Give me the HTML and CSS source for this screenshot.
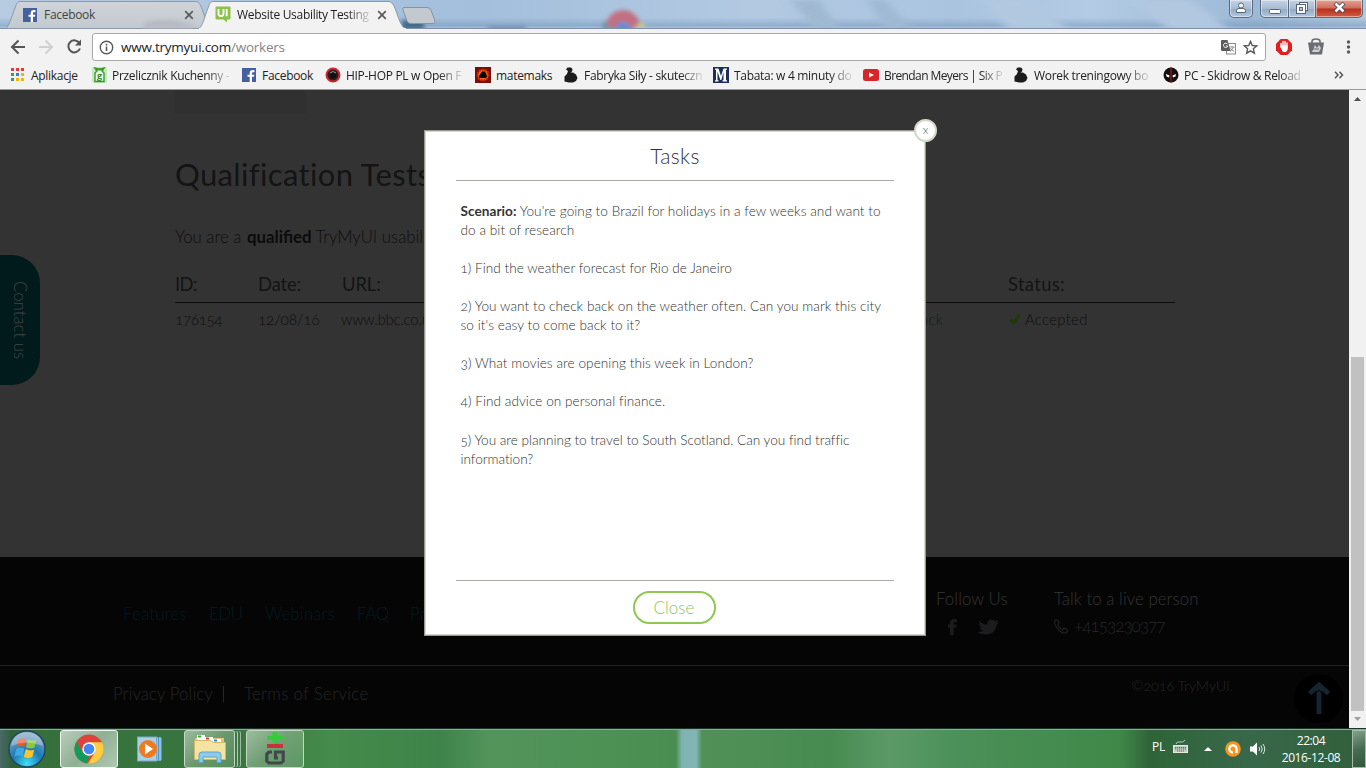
FILE: index.html
```html
<!DOCTYPE html>
<html lang="pl">
<head>
<meta charset="utf-8">
<title>Website Usability Testing</title>
<link rel="stylesheet" href="styles.css">
</head>
<body>
<header class="titlebar">
  <svg class="tab-shapes" width="1366" height="29" viewBox="0 0 1366 29">
    <defs>
      <filter id="soft" x="-50%" y="-50%" width="200%" height="200%"><feGaussianBlur stdDeviation="2"/></filter>
      <filter id="haze" x="-50%" y="-50%" width="200%" height="200%"><feGaussianBlur stdDeviation="5 2"/></filter>
      <linearGradient id="itab" x2="0" y2="1"><stop offset="0" stop-color="#d0d4d9"/><stop offset="1" stop-color="#c3c9cf"/></linearGradient>
    </defs>
    <g filter="url(#haze)">
      <path d="M790 0h30l20 30h-24zM866 0h20l26 30h-24z" fill="#a0b9d3"/>
      <path d="M980 0h50l40 30h-60zM1130 0h60l40 30h-60z" fill="#b2c8e1"/>
    </g>
    <g filter="url(#soft)">
      <path d="M605 30a18 20 0 0 1 36 0z" fill="#c16f80"/>
      <path d="M602 30q0-6 3-9l7 9z" fill="#5d9aa0"/><path d="M645 30q0-6-3-9l-10 9z" fill="#c8c69b"/>
      <circle cx="623" cy="30" r="8" fill="#5f8fd8"/>
      <path d="M402 20h22v10h-22z" fill="#456a8c"/>
      <path d="M488 27h38v4h-38z" fill="#66819f"/>
    </g>
    <path d="M0 28.500H1366" stroke="#7d92aa"/>
    <path d="M5.500 28.500C9 27 11 18 15 8C17 2 18 1.500 21 1.500H195C199 1.500 200 4 202 9L209 28.500Z" fill="url(#itab)" stroke="#8d99a8"/>
    <path d="M143 28q0-8 20-8t34 8z" fill="#b4babf" filter="url(#soft)"/>
    <path d="M198.500 29C203 26 204 18 208 8C210 2 211 1.500 214 1.500H388C392 1.500 394 5 396 11C399 19 401 27 406 29Z" fill="#f2f2f2" stroke="#8d99a8"/>
    <path d="M199 29H406" stroke="#f2f2f2" stroke-width="2"/>
    <path d="M404 7.500H427Q430 7.500 431 10L435 21Q436 23.500 433 23.500H411Q408 23.500 407 21L403 10Q402 7.500 404 7.500Z" fill="#c4c9cf" stroke="#8494a7"/>
  </svg>
  <div class="tab tab-one">
    <svg width="14" height="14" viewBox="0 0 14 14"><rect width="14" height="14" fill="#4560a0"/><path d="M10 14V8.700h2l.3-2H10V5.400c0-.8.3-1.200 1.200-1.200h1.300V2.200C12 2.100 11.300 2 10.700 2 8.800 2 7.700 3.100 7.700 5v1.700H5.500v2h2.200V14z" fill="#fff"/></svg>
    <span class="tab-text">Facebook</span>
    <svg class="tab-x" width="10" height="10" viewBox="0 0 10 10"><path d="M1.200 1.200l7.600 7.600M8.800 1.200L1.200 8.800" stroke="#5a5a5a" stroke-width="1.700"/></svg>
  </div>
  <div class="tab tab-two">
    <svg width="16" height="17" viewBox="0 0 16 17"><path d="M1.500.5h13a1 1 0 0 1 1 1v11a1 1 0 0 1-1 1H12v3l-3.500-3h-7a1 1 0 0 1-1-1v-11a1 1 0 0 1 1-1z" fill="#8bc34a"/><path d="M3.500 3v4.500q0 2.500 2.500 2.500t2.500-2.500V3M11.700 3v7.200" fill="none" stroke="#fff" stroke-width="1.900"/></svg>
    <span class="tab-text fade">Website Usability Testing</span>
    <svg class="tab-x" width="10" height="10" viewBox="0 0 10 10"><path d="M1.200 1.200l7.600 7.600M8.800 1.200L1.200 8.800" stroke="#5a5a5a" stroke-width="1.700"/></svg>
  </div>
  <div class="win-controls">
    <span class="wc user"><svg width="10" height="11" viewBox="0 0 10 11"><circle cx="5" cy="3.500" r="2.500" fill="#fff" stroke="#56657a"/><path d="M.5 10.500V8.500Q.5 6.500 3 6.500h4q2.500 0 2.500 2v2z" fill="#fff" stroke="#56657a"/></svg></span>
    <span class="wc min"><svg width="12" height="12" viewBox="0 0 12 12"><rect x=".5" y="7.500" width="11" height="4" rx="1" fill="#fff" stroke="#56657a"/></svg></span>
    <span class="wc max"><svg width="12" height="12" viewBox="0 0 12 12"><rect x="3.500" y=".5" width="8" height="8" fill="#fff" stroke="#56657a"/><rect x=".5" y="2.500" width="9" height="9" fill="#fff" stroke="#56657a"/><rect x="3.500" y="5.500" width="3" height="3" fill="#b8c8dc" stroke="#56657a"/></svg></span>
    <span class="wc shut"><svg width="13" height="11" viewBox="0 0 13 11"><path d="M2 1l9 9M11 1l-9 9" stroke="#4d3f4b" stroke-width="4.200"/><path d="M2.500 1.500l8 8M10.500 1.500l-8 8" stroke="#fff" stroke-width="2.500"/></svg></span>
  </div>
</header>

<nav class="toolbar">
  <svg class="nav-icons" width="92" height="34" viewBox="0 0 92 34">
    <g fill="none" stroke-width="2"><path d="M25 18H12.500M18.500 11.500L12 18l6.500 6.500" stroke="#555"/><path d="M39 18h12.500M45.500 11.500L52 18l-6.500 6.500" stroke="#d0d0d0"/><path d="M79.500 14.200A6 6 0 1 0 80 19.500" stroke="#555"/></g>
    <path d="M81 10.500v6h-6z" fill="#555"/>
  </svg>
  <div class="omnibox">
    <svg width="15" height="15" viewBox="0 0 15 15"><circle cx="7.500" cy="7.500" r="6.200" fill="none" stroke="#5a5a5a" stroke-width="1.400"/><path d="M7.500 6.500v4.500M7.500 3.700v1.700" stroke="#5a5a5a" stroke-width="1.600"/></svg>
    <span class="url"><span>www.trymyui.com</span><span class="path">/workers</span></span>
    <svg class="translate" width="15" height="15" viewBox="0 0 15 15"><rect x="5.500" y="3.500" width="9" height="10.500" fill="#fff" stroke="#888"/><path d="M8.500 7h5M11 6v1M12.500 7q-1 3-3.500 4.500M9.500 8q1 2.500 3.500 3.500" fill="none" stroke="#888" stroke-width=".9"/><path d="M0 1q0-1 1-1h5.500L9.500 11H1q-1 0-1-1z" fill="#5c5c5c"/><path d="M6.600 4.200A2.200 2.200 0 1 0 6.800 6H4.800" fill="none" stroke="#fff"/></svg>
    <svg width="15" height="15" viewBox="0 0 15 15"><path d="M7.500 1.400l1.800 4.100 4.500.4-3.400 2.900 1 4.400-3.900-2.300-3.900 2.300 1-4.400L1.200 5.900l4.500-.4z" fill="none" stroke="#5a5a5a" stroke-width="1.400"/></svg>
  </div>
  <svg class="ext" width="100" height="34" viewBox="0 0 100 34">
    <path d="M14.700 10h6.600l4.700 4.700v6.600L21.300 26h-6.600L10 21.300v-6.600z" fill="#e01f1f"/>
    <path d="M15 18v-3.500M17 17v-4.500M19 17v-4.500M21 17v-3" stroke="#fff" stroke-width="1.400" stroke-linecap="round"/><path d="M14.300 16.500h7.400q.6 5-1.700 6.500h-3q-2-2-2.700-6.500z" fill="#fff"/>
    <path d="M46 14.500v-2q0-2.500 4-2.500t4 2.500v2" fill="none" stroke="#6b6d74" stroke-width="1.600"/><path d="M42 13.500h16L56 25.500H44z" fill="#6b6d74"/><path d="M46 23l3-7 2 3 2-3 2 3-2 4z" fill="#cfd0d4"/><path d="M47 20h6" stroke="#6b6d74"/>
    <g fill="#5a5a5a"><circle cx="82.500" cy="13" r="1.700"/><circle cx="82.500" cy="18" r="1.700"/><circle cx="82.500" cy="23" r="1.700"/></g>
  </svg>
</nav>

<nav class="bookmarks">
  <div class="bm"><svg width="14" height="14" viewBox="0 0 14 14"><path d="M0 0h3v3H0zM5 0h3v3H5zM10 0h3v3h-3z" fill="#e53935"/><path d="M0 5h3v3H0z" fill="#35a15a"/><path d="M5 5h3v3H5z" fill="#3c7de0"/><path d="M10 5h3v3h-3z" fill="#f5b400"/><path d="M0 10h3v3H0z" fill="#35a15a"/><path d="M5 10h3v3H5zM10 10h3v3h-3z" fill="#f5b400"/></svg><span>Aplikacje</span></div>
  <div class="bm"><svg width="15" height="16" viewBox="0 0 15 16"><rect width="15" height="16" rx="2" fill="#c5e8c0"/><path d="M3 1l2 3-2 2v8.500h9V6l-2-2 2-3-3 1H6z" fill="#f4fbf0" stroke="#3c9a28" stroke-width="1.400"/><path d="M3.500 2.500h8" stroke="#3c9a28" stroke-width="2"/><text x="5" y="12" class="glyph-g">g</text></svg><span class="fade">Przelicznik Kuchenny -</span></div>
  <div class="bm"><svg width="14" height="14" viewBox="0 0 14 14"><rect width="14" height="14" fill="#4560a0"/><path d="M10 14V8.700h2l.3-2H10V5.400c0-.8.3-1.200 1.200-1.200h1.300V2.200C12 2.100 11.300 2 10.700 2 8.800 2 7.700 3.100 7.700 5v1.700H5.500v2h2.200V14z" fill="#fff"/></svg><span class="shift">Facebook</span></div>
  <div class="bm"><svg width="16" height="16" viewBox="0 0 16 16"><circle cx="8" cy="8" r="6.500" fill="#2b2022" stroke="#d8232f" stroke-width="2"/><circle cx="8" cy="8" r="3.500" fill="#111"/><path d="M5 6q3-3 6 0" stroke="#999" fill="none"/></svg><span class="fade">HIP-HOP PL w Open F</span></div>
  <div class="bm"><svg width="16" height="16" viewBox="0 0 16 16"><rect width="16" height="16" fill="#7a0e05"/><circle cx="8" cy="8" r="5.500" fill="#f0641a" stroke="#c22a08" stroke-width="2" stroke-dasharray="2 1"/><path d="M7 4.500h3l2 4.500-1 2H4.500L4 9z" fill="#0c0200"/></svg><span>matemaks</span></div>
  <div class="bm"><svg width="14" height="16" viewBox="0 0 14 16"><path d="M2 2.500L3.500 .500H7L8.500 2 8 4.500 6.500 5.500 9 5.500 12 7.500 13.500 11 12 14 9 15.500H5L.500 14.500V9.500L3 7 4 4z" fill="#1c1c1c"/></svg><span class="fade shift">Fabryka Siły - skuteczn</span></div>
  <div class="bm"><svg width="16" height="16" viewBox="0 0 16 16"><rect width="16" height="16" fill="#1c2f5c"/><path d="M2 1.500h3.500L8 9l2.500-7.500H14v1.200h-1v10.600h1v1.200H9.500v-1.200h1V5L8.300 13h-1L4.500 4.500v8.800h1v1.200H2v-1.200h1V2.700H2z" fill="#fff"/></svg><span class="fade">Tabata: w 4 minuty do</span></div>
  <div class="bm"><svg width="16" height="12" viewBox="0 0 16 12"><rect width="16" height="12" rx="2.500" fill="#d8252a"/><path d="M6 3.500l5 2.500-5 2.500z" fill="#fff"/></svg><span class="fade tight">Brendan Meyers | Six P</span></div>
  <div class="bm"><svg width="14" height="16" viewBox="0 0 14 16"><path d="M2 2.500L3.500 .500H7L8.500 2 8 4.500 6.500 5.500 9 5.500 12 7.500 13.500 11 12 14 9 15.500H5L.500 14.500V9.500L3 7 4 4z" fill="#1c1c1c"/></svg><span class="fade shift">Worek treningowy bo</span></div>
  <div class="bm"><svg width="16" height="16" viewBox="0 0 16 16"><circle cx="8" cy="8" r="7.500" fill="#141010"/><path d="M8 0v16" stroke="#a31a1e" stroke-width="1.200"/><path d="M3 7l3.500 1.500L6 10.500 3.500 9.500zM13 7L9.500 8.500l.5 2 2.500-1z" fill="#fff"/></svg><span class="fade">PC - Skidrow &amp; Reload</span></div>
  <svg class="more" width="10" height="8" viewBox="0 0 10 8"><path d="M1 .8L4 4 1 7.200M5.500 .8L8.500 4l-3 3.200" fill="none" stroke="#555" stroke-width="1.500"/></svg>
</nav>

<main class="viewport">
  <div class="site">
    <section class="content">
      <div class="stub"></div>
      <h1>Qualification Tests</h1>
      <p class="lead"><span class="intro">You are a</span><b>qualified</b><span>TryMyUI usability</span></p>
      <div class="row head"><span class="h-id">ID:</span><span>Date:</span><span>URL:</span><span></span><span class="h-status">Status:</span></div>
      <div class="row"><span class="num-id">176154</span><span class="num-date">12/08/16</span><span class="site-url">www.bbc.co.uk</span><span class="fb">Feedback</span><span class="ok"><svg width="12" height="12" viewBox="0 0 12 12"><path d="M1.500 6.500l3 3.500L10.500 2" fill="none" stroke="#1d3a08" stroke-width="3"/></svg>Accepted</span></div>
    </section>
    <footer class="foot">
      <div class="foot-top">
        <div class="links"><a class="features">Features</a><a class="edu">EDU</a><a class="webinars">Webinars</a><a class="faq">FAQ</a><a>Pricing</a></div>
        <div class="follow">Follow Us<div class="social">
          <svg width="9" height="16" viewBox="0 0 9 16"><path d="M2 16V8.500H0V5.500h2V4q0-4 4-4h2.700v3H7Q5.600 3 5.600 4.300v1.200h3L8.200 8.500H5.600V16z" fill="#1c1c1e"/></svg>
          <svg width="22" height="16" viewBox="0 0 22 16"><path d="M2 1.500q3 4 8.500 4Q10 .500 14.500.500q2 0 3.500 1.500l3-1-1.500 2.500L22 3.500l-2.500 2.500Q19 15.500 8 15.500q-4 0-7.500-2.500 4 0 6-1.500-3-.500-4-3h2Q2 7.500 2 1.500z" fill="#1c1c1e"/></svg></div></div>
        <div class="talk">Talk to a live person<div class="phone"><svg width="14" height="15" viewBox="0 0 14 15"><path d="M1 1.500Q3-.500 4.500 2.500q1 2-.500 3Q4.500 8.500 8 10.500q2-2 4-.500 2.500 1.500 1 3-3 2.500-7-1Q-.500 6 1 1.500z" fill="none" stroke="#232323" stroke-width="1.100"/></svg><span>+4153230377</span></div></div>
      </div>
      <div class="foot-bottom"><span class="privacy">Privacy Policy</span><span class="bar"></span><span class="terms">Terms of Service</span><span class="copy">©2016 TryMyUI.</span>
        <span class="to-top"><svg width="24" height="34" viewBox="0 0 24 34"><path d="M12 32V6M2.500 11.500L12 3l9.500 8.500" fill="none" stroke="#142430" stroke-width="5"/><path d="M8 12l4-4 4 4" fill="none" stroke="#000"/></svg></span>
      </div>
    </footer>
    <div class="contact">Contact us</div>
  </div>
  <div class="scroll">
    <svg width="7" height="4" viewBox="0 0 7 4"><path d="M3.500 0L7 4H0z" fill="#505050"/></svg>
    <div class="thumb"></div>
    <svg width="7" height="4" viewBox="0 0 7 4"><path d="M3.500 4L7 0H0z" fill="#a0a0a0"/></svg>
  </div>
  <div class="modal">
    <div class="x">x</div>
    <h2>Tasks</h2>
    <div class="body">
      <p><b>Scenario:</b> You're going to Brazil for holidays in a few weeks and want to<br>do a bit of research</p>
      <p class="one">1) Find the weather forecast for Rio de Janeiro</p>
      <p>2) You want to check back on the weather often. Can you mark this city<br>so it's easy to come back to it?</p>
      <p>3) What movies are opening this week in London?</p>
      <p>4) Find advice on personal finance.</p>
      <p class="five">5) You are planning to travel to South Scotland. Can you find traffic<br>information?</p>
    </div>
    <div class="actions"><button>Close</button></div>
  </div>
</main>

<footer class="taskbar">
  <svg class="orb" width="40" height="40" viewBox="0 0 40 40"><defs><radialGradient id="orb" cx=".5" cy=".9" r=".9"><stop offset="0" stop-color="#3fe0f5"/><stop offset=".45" stop-color="#1a7ab5"/><stop offset="1" stop-color="#8eacc2"/></radialGradient></defs><circle cx="20" cy="20" r="18" fill="url(#orb)" stroke="#22465e" stroke-width="1.500"/><path d="M11 11q4-3 8-1l-1.500 8q-4-2-8 .500z" fill="#e8592a"/><path d="M20.500 10.500q5 2 9 0l-2 8q-4 2-8.500 0z" fill="#8cc63f"/><path d="M9.300 20q4-2.500 8-.5l-2 8q-4-2-8 .5z" fill="#3fa9e8"/><path d="M18.800 20q4 2.500 8.500.5l-2 7.500q-4 2-8.500 0z" fill="#fbc32d"/><path d="M4 17Q6 4 20 3.500 34 4 36 17 20 10 4 17z" fill="#fff" opacity=".3"/></svg>
  <div class="tb active"><svg width="30" height="30" viewBox="0 0 30 30"><circle cx="15" cy="15" r="14.500" fill="#db4437"/><path d="M2.440 7.750L8.800 18.500 15 21.700 13 29.400A14.500 14.500 0 0 1 2.440 7.750z" fill="#0f9d58"/><path d="M15 8.300H27.900A14.500 14.500 0 0 1 14 29.500L20.800 18.300z" fill="#ffcd40"/><circle cx="15" cy="15" r="6.700" fill="#fff"/><circle cx="15" cy="15" r="5.300" fill="#4285f4"/></svg></div>
  <div class="tb plain"><svg width="26" height="26" viewBox="0 0 26 26"><path d="M18 1l7 1v22l-7 1z" fill="#4a9ad0"/><path d="M20 1v24M23 1v24" stroke="#cfe9f8"/><rect x=".5" y="1" width="19" height="24" fill="#a9cfe6" stroke="#7aa9c6"/><circle cx="11" cy="13" r="9" fill="#f27a1e"/><path d="M8 7.500l8 5.500-8 5.500z" fill="#fff"/></svg></div>
  <div class="tb stack"><svg width="34" height="30" viewBox="0 0 34 30"><path d="M2 4h29v22H2z" fill="#e2c673"/><path d="M4 1h8v7H4z" fill="#fff"/><path d="M5 1.500h3v2H5z" fill="#2eb52e"/><path d="M12 3h8v5h-8z" fill="#fff"/><path d="M13 3.500h3v2h-3z" fill="#d03b2b"/><path d="M20 5h8v4h-8z" fill="#fff"/><path d="M21 5.500h3v2h-3z" fill="#2f80d8"/><path d="M1.500 6.500h16l3 2h12v17h-31z" fill="#f4e3a1" stroke="#d4b868"/><path d="M6 28.500V21q0-3 3-3h16q3 0 3 3v7.500h-4V23H10v5.500z" fill="#8ccbe9" stroke="#5fa6cf"/></svg></div>
  <div class="tb g"><svg width="24" height="36" viewBox="0 0 24 36"><path d="M4 5h5.500V1h5v4H20v4h-5.500v4h-5V9H4z" fill="#35cb3a"/><path d="M4 13h16v4H4z" fill="#cf2f3c"/><path d="M9 21H6L3.800 23v7L6 32h12l2.200-2v-9H12.500v6H15" fill="none" stroke="#43484c" stroke-width="3.200"/></svg></div>
  <div class="tray">
    <span class="pl">PL</span>
    <svg class="kb" width="16" height="15" viewBox="0 0 16 15"><path d="M3 5q1-3 4-2t5-2" fill="none" stroke="#bcc8bd"/><rect x=".5" y="6.500" width="14" height="7" fill="#c6cec7" stroke="#e5e9e5"/><path d="M2 8.500h11M2 10h11M4 12h7" stroke="#59705c" stroke-dasharray="1.300 .7"/></svg>
    <svg class="up" width="8" height="4" viewBox="0 0 8 4"><path d="M4 0l4 4H0z" fill="#fff"/></svg>
    <svg class="av" width="16" height="16" viewBox="0 0 16 16"><circle cx="8" cy="8" r="7.800" fill="#f7941e"/><path d="M11.500 12V8A3.600 3.600 0 1 0 8 11.500" fill="none" stroke="#fff" stroke-width="2.300"/></svg>
    <svg class="sp" width="16" height="14" viewBox="0 0 16 14"><path d="M0 4.500h3L7 .500v13L3 9.500H0z" fill="#fff"/><path d="M9 5q1.500 2 0 4M11 3.500q2.500 3.500 0 7M13 2q3.500 5 0 10" fill="none" stroke="#dfe8df"/></svg>
    <div class="clock"><span>22:04</span><span>2016-12-08</span></div>
    <div class="peek"></div>
  </div>
</footer>
</body>
</html>
```
FILE: styles.css
```css
* { box-sizing: border-box; }
body { margin: 0; width: 1366px; height: 768px; overflow: hidden; display: flex; flex-direction: column; font-family: "Open Sans", "Noto Sans", sans-serif; font-size: 12px; color: #222; }
svg { display: block; flex: none; }

.titlebar { position: relative; height: 29px; flex: none; display: flex; background: linear-gradient(180deg, rgba(255,255,255,0) 60%, rgba(110,145,180,.45) 88%, rgba(180,205,230,.3)), linear-gradient(90deg, #b7cbe1, #a3bfdc 35%, #b3c9e2 55%, #aac4e0 70%, #b3cbe4 80%, #9db9d6 92%, #b3c9e0); }
.tab-shapes { position: absolute; left: 0; top: 0; }
.tab { position: relative; display: flex; align-items: center; height: 29px; }
.tab-one { width: 199px; padding: 0 5px 0 23px; }
.tab-two { width: 205px; padding: 0 17px 0 16px; }
.tab-text { margin-left: 7px; white-space: nowrap; letter-spacing: -.3px; }
.tab-one .tab-text { color: #444; }
.tab-two .tab-text { margin-left: 6px; letter-spacing: -.3px; }
.tab-x { margin-left: auto; }
.fade { -webkit-mask-image: linear-gradient(270deg, rgba(0,0,0,.15), #000 22px); }
.win-controls { position: relative; margin-left: auto; display: flex; align-items: flex-start; padding-right: 3px; }
.wc { height: 18px; border: 1px solid #5b6c82; border-top: 0; display: flex; justify-content: center; align-items: center; background: linear-gradient(#c5d3e4, #a7bbd2 50%, #91a9c4 52%, #b4c8de); box-shadow: inset 0 0 0 1px rgba(255,255,255,.45); }
.wc svg { margin-top: -2px; }
.user { width: 24px; border-radius: 0 0 5px 5px; margin-right: 7px; }
.min { width: 29px; border-radius: 0 0 0 5px; }
.max { width: 27px; border-left: 0; }
.shut { width: 47px; border-left: 0; border-radius: 0 0 5px 0; background: linear-gradient(#dfa498, #cf6d5b 48%, #b9301c 52%, #cf5c42); }

.toolbar { height: 34px; flex: none; background: #f2f2f2; display: flex; }
.omnibox { margin-top: 4px; width: 1174px; height: 28px; background: #fff; border: 1px solid #a8a8a8; border-radius: 3px; display: flex; align-items: center; padding: 0 7px 0 6px; }
.url { margin-left: 7px; font-size: 13.5px; letter-spacing: -.24px; }
.path { color: #858585; }
.translate { margin-left: auto; margin-right: 7px; }

.bookmarks { height: 27px; flex: none; background: #f2f2f2; border-bottom: 1px solid #9b9b9b; display: grid; grid-template-columns: 81px 150px 83px 150px 89px 149px 150px 151px 149px 171px 10px; padding: 0 0 2px 11px; align-items: center; }
.bm { display: flex; align-items: center; gap: 5px; white-space: nowrap; letter-spacing: -.3px; }
.bm:first-child { gap: 6px; }
.shift { margin-left: 1px; }
.tight { letter-spacing: -.6px; }
.glyph-g { font: bold 9px "Open Sans", sans-serif; fill: #2f8a1e; }

.viewport { position: relative; height: 638px; flex: none; display: flex; }
.site { position: relative; width: 1349px; background: #333; font-family: Lato, "Open Sans", sans-serif; font-weight: 300; font-variant-numeric: oldstyle-nums; color: #0e0e0e; display: flex; flex-direction: column; white-space: nowrap; }
.content { height: 467px; padding-left: 175px; }
.stub { width: 131px; height: 24px; background: #303030; }
h1 { margin: 41px 0 0; font-size: 31px; line-height: 38px; font-weight: 400; letter-spacing: .35px; color: #141414; }
.lead { margin: 34px 0 0; font-size: 16.8px; line-height: 20px; display: flex; }
.intro { width: 72px; }
.lead b { font-weight: 700; color: #0b0b0b; margin-right: 4px; }
.row { display: grid; grid-template-columns: 83px 84px 538px 128px 167px; width: 1000px; height: 31px; align-items: center; font-size: 14.8px; }
.row.head { margin-top: 19px; height: 37px; font-size: 18.4px; font-weight: 400; border-bottom: 1px solid #0c0c0c; color: #141414; letter-spacing: -.1px; }
.row .h-id { letter-spacing: -.7px; }
.row .h-status { letter-spacing: .35px; }
.num-id { font-size: 15.5px; letter-spacing: -.5px; }
.num-date { font-size: 15.5px; letter-spacing: -.3px; }
.site-url { letter-spacing: -.15px; margin-left: -1px; }
.fb { color: #101b22; letter-spacing: .3px; }
.ok { display: flex; align-items: center; gap: 4px; padding-left: 1px; letter-spacing: .35px; }
.contact { position: absolute; left: 0; top: 165px; width: 40px; height: 130px; background: #011a1c; border-radius: 0 28px 28px 0; writing-mode: vertical-rl; display: flex; align-items: center; justify-content: center; font-size: 16.8px; color: #434343; }

.foot { height: 171px; background: #050505; font-size: 16.8px; }
.foot-top { height: 109px; border-bottom: 1px solid #222; padding: 32px 0 0 123px; display: flex; }
.links { width: 813px; display: flex; padding-top: 15px; color: #041a24; line-height: 20px; letter-spacing: .2px; }
.features { width: 86px; }
.edu { width: 56px; letter-spacing: -.5px; }
.webinars { width: 92px; }
.faq { width: 53px; letter-spacing: -.3px; }
.follow { width: 118px; line-height: 20px; color: #363636; letter-spacing: .1px; }
.social { display: flex; gap: 20px; padding: 10px 0 0 12px; }
.talk { line-height: 20px; color: #363636; letter-spacing: .07px; }
.phone { display: flex; align-items: center; gap: 6px; margin-top: 7px; color: #282828; font-size: 17px; letter-spacing: -.95px; }
.foot-bottom { height: 62px; padding: 18px 9px 0 113px; display: flex; line-height: 20px; color: #262626; }
.privacy { width: 100px; letter-spacing: .1px; }
.bar { width: 1px; height: 16px; margin: 2px 20px 0 10px; background: #262626; }
.terms { letter-spacing: .35px; }
.copy { margin-left: auto; font-size: 14.5px; margin-top: -8px; letter-spacing: -.15px; }
.to-top { width: 49px; height: 49px; margin: -10px -3px 0 61px; border-radius: 50%; background: #000; display: flex; align-items: center; justify-content: center; }

.scroll { width: 17px; background: #f1f1f1; display: flex; flex-direction: column; align-items: center; padding: 7px 0 7px; }
.thumb { width: 13px; height: 354px; background: #c1c1c1; margin: 256px 0 6px; }

.modal { position: absolute; left: 424px; top: 40px; width: 502px; height: 506px; background: #fff; border: 1px solid #96998f; box-shadow: inset 0 0 0 1px #d5d9cd; padding: 0 31px; font-family: Lato, "Open Sans", sans-serif; font-weight: 300; font-variant-numeric: oldstyle-nums; color: #333; display: flex; flex-direction: column; white-space: nowrap; }
.modal .x { position: absolute; right: -12px; top: -12px; width: 23px; height: 23px; border-radius: 50%; border: 2px solid #d2d8ca; background: #fff; font-size: 12px; line-height: 18px; text-align: center; color: #555; }
h2 { margin: 0; height: 50px; border-bottom: 1px solid #aaaaa0; font-size: 21px; font-weight: 300; line-height: 49px; text-align: center; letter-spacing: .4px; }
.body { height: 400px; border-bottom: 1px solid #aaaea2; padding: 20.500px 0 0 4.500px; font-size: 13.6px; line-height: 19.1px; letter-spacing: .055px; }
.body p { margin: 0 0 19.1px; }
.body .one { letter-spacing: .02px; }
.body .five { letter-spacing: -.02px; }
.body b { font-weight: 700; }
.actions { display: flex; justify-content: center; padding: 10px 2px 0 0; }
button { width: 83px; height: 33px; border: 2px solid #8fc654; border-radius: 17px; background: #fff; color: #8fc654; font: 300 17px/20px Lato, "Open Sans", sans-serif; padding: 0; }

.taskbar { height: 40px; flex: none; display: flex; align-items: center; border-top: 1px solid #1b3529; box-shadow: inset 0 1px 0 #8bac95; padding-left: 7px; background: linear-gradient(90deg, #4a6a68 0, #2f6138 12px, #35703c 40px, #39773f 240px, #458b4b 330px, #3e8349 440px, #53945b 490px, #4b9052 640px, #4a8d51 676px, #7fb3b3 682px, #82b5b7 696px, #519158 702px, #478b50 830px, #5b9a68 890px, #4b9058 960px, #3f8848 1120px, #2f6438 1150px, #38684a 1250px, #315f3b 1366px); }
.tb { height: 38px; display: flex; align-items: center; justify-content: center; border: 1px solid #c5d6c5; border-radius: 3px; background: linear-gradient(135deg, rgba(255,255,255,.5), rgba(255,255,255,.25) 50%, rgba(255,255,255,.15)); }
.active { width: 58px; margin-left: 13px; border-color: #f2f6f2; background: linear-gradient(135deg, #b9cdbb, #8fb093 50%, #b0c8b2); }
.plain { width: 26px; margin-left: 19px; border: 0; background: none; }
.stack { width: 51px; margin-left: 21px; box-shadow: 3px 0 0 -1px #3c7745, 4px 0 0 -1px #b3c9b5, 6px 0 0 -1px #3c7745, 7px 0 0 -1px #9fbaa1; }
.g { width: 58px; margin-left: 11px; }
.tray { margin-left: auto; display: flex; align-items: center; color: #fff; height: 39px; }
.pl { margin-right: 8px; margin-top: -5px; letter-spacing: -.3px; }
.kb { margin-top: -5px; }
.up { margin-left: 15px; }
.av { margin-left: 13px; }
.sp { margin-left: 9px; }
.clock { width: 82px; margin-left: 4px; display: flex; flex-direction: column; text-align: center; line-height: 17px; padding-top: 1px; letter-spacing: -.4px; }
.peek { width: 14px; height: 38px; border: 1px solid #a3bba8; background: linear-gradient(160deg, #86a08c, #456c50 50%, #31583c); }
```
